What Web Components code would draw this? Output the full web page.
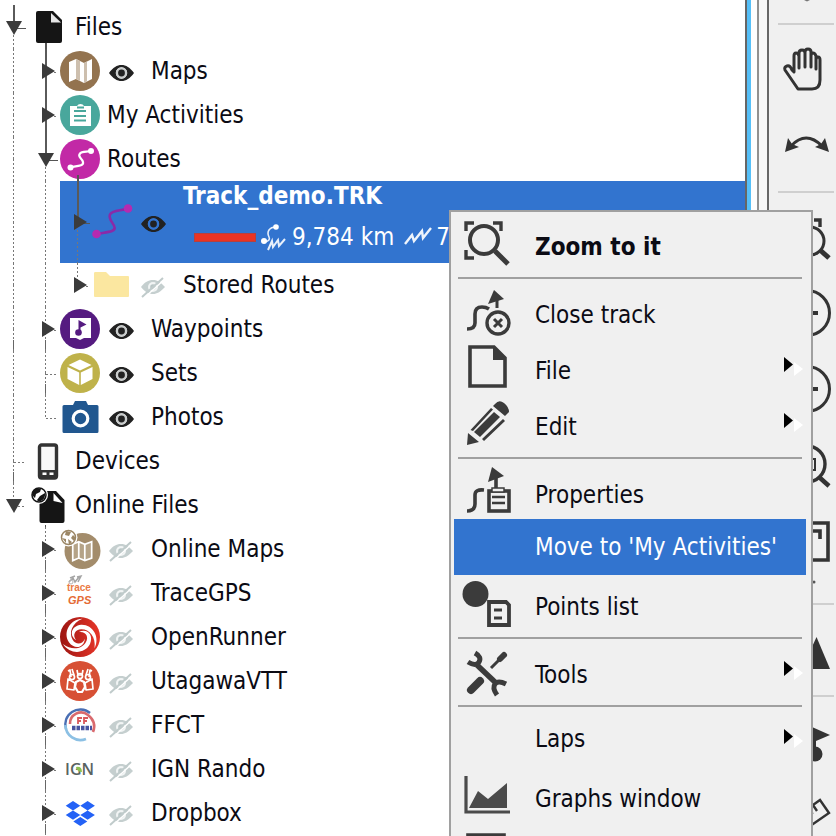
<!DOCTYPE html>
<html lang="en">
<head>
<meta charset="utf-8">
<title>Files</title>
<style>
  html, body { height: 100%; margin: 0; }
  body {
    overflow: hidden;
    background: #fff;
    color: #0b0b14;
    font: 24px/30px "DejaVu Sans Condensed", "DejaVu Sans", sans-serif;
  }
</style>
</head>
<body>
<app-window>
  <file-tree slot="tree">
    <tree-row icon="files" lines="sd" branch="open" stub="solid" child="solid">Files</tree-row>
    <tree-row icon="maps" lines="dd ss" branch="closed" eye="on">Maps</tree-row>
    <tree-row icon="activities" lines="dd ss" branch="closed">My Activities</tree-row>
    <tree-row icon="routes" lines="dd sd" branch="open" stub="solid" child="solid">Routes</tree-row>
    <tree-row icon="track" lines="dd dd sd" branch="closed" stub="solid" eye="on" selected>
      <track-summary color="#ea3323" distance="9,784 km" climb="7">Track_demo.TRK</track-summary>
    </tree-row>
    <tree-row icon="folder" lines="dd dd dn" branch="closed" eye="off">Stored Routes</tree-row>
    <tree-row icon="waypoints" lines="dm dm" branch="closed" eye="on">Waypoints</tree-row>
    <tree-row icon="sets" lines="dd dm" eye="on">Sets</tree-row>
    <tree-row icon="photos" lines="dd dn" eye="on">Photos</tree-row>
    <tree-row icon="device" lines="dm">Devices</tree-row>
    <tree-row icon="online" lines="dn" branch="open" child="dots">Online Files</tree-row>
    <tree-row icon="onlinemaps" lines="nn dm" branch="closed" eye="off">Online Maps</tree-row>
    <tree-row icon="tracegps" lines="nn dm" branch="closed" eye="off">TraceGPS</tree-row>
    <tree-row icon="openrunner" lines="nn dm" branch="closed" eye="off">OpenRunner</tree-row>
    <tree-row icon="utagawa" lines="nn dm" branch="closed" eye="off">UtagawaVTT</tree-row>
    <tree-row icon="ffct" lines="nn dm" branch="closed" eye="off">FFCT</tree-row>
    <tree-row icon="ign" lines="nn dm" branch="closed" eye="off">IGN Rando</tree-row>
    <tree-row icon="dropbox" lines="nn dm" branch="closed" eye="off">Dropbox</tree-row>
  </file-tree>

  <tool-bar slot="tools">
    <tool-button icon="more" label="More" short></tool-button>
    <tool-divider></tool-divider>
    <tool-button icon="hand" label="Pan"></tool-button>
    <tool-button icon="arc" label="Rotate"></tool-button>
    <tool-divider></tool-divider>
    <tool-button icon="zoomfit" label="Zoom to fit"></tool-button>
    <tool-button icon="plus" label="Zoom in"></tool-button>
    <tool-button icon="minus" label="Zoom out"></tool-button>
    <tool-button icon="zoomone" label="Zoom 1:1"></tool-button>
    <tool-button icon="frame" label="Window"></tool-button>
    <tool-button icon="dot" label="Window options" short></tool-button>
    <tool-divider></tool-divider>
    <tool-button icon="relief" label="Relief"></tool-button>
    <tool-divider></tool-divider>
    <tool-button icon="flag" label="Waypoint"></tool-button>
    <tool-button icon="ruler" label="Measure"></tool-button>
  </tool-bar>

  <context-menu slot="menu">
    <menu-item icon="zoomto" strong>Zoom to it</menu-item>
    <menu-divider></menu-divider>
    <menu-item icon="closetrack">Close track</menu-item>
    <menu-item icon="file" submenu>File</menu-item>
    <menu-item icon="edit" submenu>Edit</menu-item>
    <menu-divider></menu-divider>
    <menu-item icon="properties">Properties</menu-item>
    <menu-item active>Move to 'My Activities'</menu-item>
    <menu-item icon="points">Points list</menu-item>
    <menu-divider></menu-divider>
    <menu-item icon="tools" submenu>Tools</menu-item>
    <menu-divider></menu-divider>
    <menu-item submenu>Laps</menu-item>
    <menu-item icon="graphs">Graphs window</menu-item>
    <menu-item icon="window"></menu-item>
  </context-menu>
</app-window>

<script>
const INK = "#3b3b3b";

const eyeShape = (color, hole) => `
  <path fill="${color}" fill-rule="evenodd" d="M2 14C6 8.500 10 6 14.500 6S23 8.500 27 14C23 19.500 19 22 14.500 22S6 19.500 2 14ZM14.500 8.300a5.700 5.700 0 1 0 0 11.400a5.700 5.700 0 1 0 0-11.400Z"/>
  <circle cx="14.500" cy="14" r="5.700" fill="${hole}"/>
  <circle cx="14.500" cy="14" r="3.400" fill="${color}"/>`;

const mapFolds = (shade) => `
  <path fill="#fff" d="M9 11l7-3v20l-7 3zM24 12l8-4v20l-8 4z"/>
  <path fill="#fff" d="M16 8l8 4v20l-8-4z"/>
  <path fill="${shade}" d="M16 8l4 2v20l-4-2zM24 12l3-1.500v20L24 32z"/>`;

const globe = (x, y, color) => `
  <circle cx="${x}" cy="${y}" r="9" fill="#fff"/>
  <circle cx="${x}" cy="${y}" r="7" fill="#fff" stroke="${color}" stroke-width="1.500"/>`;

// [width, height, markup]
const ICONS = {
  files: [40, 40, `<path fill="#151515" d="M10 4h15l9 9v21q0 2-2 2H10q-2 0-2-2V6q0-2 2-2z"/><path fill="#e6e6e6" d="M23 6l10 9.500H23z"/>`],
  online: [40, 40, `<path fill="#151515" d="M13 6h15l8.500 9v21q0 2-2 2h-21q-2 0-2-2V8q0-2 1.500-2z"/><path fill="#fff" d="M25.500 8l9 10-9-2z"/>${globe(11, 10, "#151515")}<path fill="#151515" d="M4 10q0-5 5-7l4 1-1 3-4 2-1 4zM12 11l5-3q1 5-4 8-3 1-4-1z"/>`],
  maps: [40, 40, `<circle cx="20" cy="20" r="20" fill="#93734f"/>${mapFolds("#cdbfae")}`],
  onlinemaps: [40, 40, `<circle cx="22.500" cy="22" r="18" fill="#a38c6b"/><g transform="translate(5 5) scale(.86)" stroke="#fff" stroke-width="2" fill="none"><path fill="#b5a387" d="M9 12l7-3 7 3 8-3v19l-8 3-7-3-7 3z"/><path d="M16 9v19M23 12v19"/></g>${globe(8.5, 8.5, "#9c8766")}<path fill="#9c8766" d="M6 2l5 1-2 4-4-1zM13 6l3 3-2 3-3-3zM2 9l4 1v4zM8 10l4 3-3 3z"/>`],
  activities: [40, 40, `<circle cx="20" cy="20" r="20" fill="#49a79c"/><path fill="#fff" d="M10 11h7q1-2 3.500-2t3.500 2h7v20H10z"/><path stroke="#49a79c" stroke-width="1.800" d="M14 16h12M14 21h12M14 25.500h12M17 12.500h7"/>`],
  routes: [40, 40, `<circle cx="20" cy="20" r="20" fill="#c229a6"/><path fill="none" stroke="#fff" stroke-width="2.200" d="M11 28C18 27 24 27 23 23S17 18 20 14.500C21.500 12 27 13 31 12"/><circle cx="10.500" cy="28.500" r="3" fill="#fff"/><circle cx="31" cy="12" r="3" fill="#fff"/>`],
  track: [40, 40, `<path fill="none" stroke="#8a2aa8" stroke-width="2.600" d="M4.500 32C15 30 24 30 22.500 25C21.500 21 16 17 18 12.500C20 8 29 9 36 6.500"/><circle cx="4.500" cy="32" r="4.300" fill="#b52bb0"/><circle cx="36" cy="6.500" r="4.300" fill="#b52bb0"/>`],
  folder: [40, 40, `<path fill="#fbe7a0" d="M3.500 7H14l4 4h18q1 0 1 1v19q0 1-1 1H3q-1 0-1-1V8q0-1 1.500-1z"/>`],
  waypoints: [40, 40, `<circle cx="20" cy="20" r="20" fill="#551b80"/><path fill="#fff" d="M10 9h21v20h-7l-4 2-4-2h-6z"/><circle cx="18.500" cy="23.500" r="3.300" fill="#551b80"/><path fill="#551b80" d="M18.500 23V11l8 4.500-6 3V23z"/>`],
  sets: [40, 40, `<circle cx="20" cy="20" r="20" fill="#bfb24a"/><path fill="#fff" d="M20 6.500L31.500 12 20 17.500 8.500 12zM7.500 14l11.700 5.500V32L7.500 26zM32.500 14l-11.700 5.500V32l11.700-6z"/>`],
  photos: [40, 40, `<path fill="#21578f" d="M4 8h9l2-4h11l2 4h9q1.500 0 1.500 1.500v25q0 1.500-1.500 1.500H4q-1.500 0-1.500-1.500v-25Q2.500 8 4 8z"/><circle cx="20.500" cy="21.500" r="7.300" fill="#21578f" stroke="#fff" stroke-width="3.200"/>`],
  device: [40, 40, `<rect x="11.500" y="4" width="17" height="33" rx="2" fill="#f8f8f8" stroke="#333" stroke-width="3.400"/><path fill="#333" d="M11 29h18v8H11z"/><path fill="#fff" d="M14.500 31.500h4v2.500h-4zM21.500 31.500h4v2.500h-4z"/>`],
  tracegps: [40, 40, `<path fill="none" stroke="#a5a5a5" stroke-width="1.500" d="M9 9l4-4 2 4 4-5M10 5l5-2M17 4l4-1-3 6"/><circle cx="11" cy="9" r="2" fill="none" stroke="#b5b5b5"/><text x="7" y="18" fill="#ea7a45" font-family="Liberation Sans" font-weight="bold" font-size="10">trace</text><text x="8" y="31" fill="#e46b35" font-family="Liberation Sans" font-weight="bold" font-style="italic" font-size="11">GPS</text>`],
  openrunner: [40, 40, `<defs><linearGradient id="g"><stop stop-color="#9c1511"/><stop offset="1" stop-color="#e83629"/></linearGradient></defs><circle cx="20" cy="20" r="20" fill="url(#g)"/><g fill="#fff"><path id="arm" d="M19 15C26 14 29 20 26 25C22 32 12 34 3 27C10 38 25 37 30 27C34 18 27 11 19 15Z"/><use href="#arm" transform="rotate(120 20 20)"/><use href="#arm" transform="rotate(240 20 20)"/></g>`],
  utagawa: [40, 40, `<circle cx="20" cy="20" r="20" fill="#d75034"/><g fill="none" stroke="#fff" stroke-width="1.700" stroke-linejoin="round"><path d="M8 10l2-1 1 7M12 8l2 6M26 14l2-6M29 16l1-7 2 1M17 9l1 5h4l1-5"/><circle cx="12" cy="16" r="2.500"/><circle cx="28" cy="16" r="2.500"/><circle cx="20" cy="15" r="2.500"/><path d="M8 18l-1 10 7 1 1-7zM32 18l1 10-7 1-1-7z"/></g><path fill="#d75034" stroke="#fff" stroke-width="2.200" d="M16 21l4-2 4 2 1 5-3 5h-4l-3-5z"/>`],
  ffct: [40, 40, `<path fill="none" stroke="#4a6fb4" stroke-width="2.400" d="M30 8A15 15 0 0 0 6 24"/><path fill="none" stroke="#8cc0e4" stroke-width="2.600" d="M5.500 20A15 15 0 0 0 26 34"/><path fill="none" stroke="#d96a6e" stroke-width="2.600" d="M10 19A11 11 0 0 1 28 10Q37 17 33 27"/><path fill="#fff" d="M12 20q1-9 9-9t10 9z"/><path stroke="#d9585c" stroke-width="1.800" fill="none" d="M18 19v-6h4M18 16h3M24 19v-6h4M24 16h3"/><path fill="none" stroke="#4954a0" stroke-width="4.500" stroke-dasharray="3.500 1" d="M12 23h20"/>`],
  ign: [40, 40, `<text x="5" y="26" fill="#596361" font-family="Open Sans, sans-serif" font-weight="600" font-size="16">IGN</text><path fill="#8cc152" d="M16 18q6-1 6 5q-5 0-6-5z"/>`],
  dropbox: [40, 40, `<path fill="#2462f6" d="M13 8l7.300 4.700L13 17.400 5.700 12.700zM27.600 8l7.300 4.700-7.300 4.700-7.300-4.700zM13 17.400l7.300 4.700L13 26.800 5.700 22.100zM27.600 17.400l7.300 4.700-7.300 4.700-7.300-4.700zM20.300 24l7 4.500-7 4.500-7-4.500z"/>`],

  eyeon: [28, 24, eyeShape("#222", "#c9cccc")],
  eyesel: [28, 24, eyeShape("#222", "#3274cf")],
  eyeoff: [28, 24, `<path fill="#c5cfcf" d="M2 14C6 9 9 7 14 7S21 9 26 14C21 19 18 21 14 21S6 19 2 14Z"/><circle cx="14" cy="14" r="5" fill="#f1f4f4"/><circle cx="14" cy="14" r="2.800" fill="#b9c6c6"/><path stroke="#fff" stroke-width="1.500" d="M5 25L26 6"/><path stroke="#c0cbcb" stroke-width="2" d="M3 24L24 5"/>`],
  open: [24, 16, `<path fill="#3b3b3b" d="M0 2h16L8 16z"/>`],
  closed: [24, 16, `<path fill="#3b3b3b" d="M4 0v16l13-8z"/>`],
  distance: [28, 28, `<g fill="none" stroke="#e8f0fb" stroke-width="1.600"><path d="M4 19q7-1 5-5t0-7q2-3 7-3"/><path stroke-width="2" d="M8 27l4-9 1 6 5-7 1 6 6-7"/></g><circle cx="4" cy="18" r="3" fill="#fff"/><circle cx="16" cy="4" r="2.800" fill="#fff"/>`],
  climb: [28, 28, `<path fill="none" stroke="#eef4fc" stroke-width="2.400" d="M1 21l7-9 2 6 8-10 1 7 8-10"/>`],

  zoomto: [48, 48, `<g fill="none" stroke="${INK}"><path stroke-width="3.400" d="M3 12V4h8M30 4h8v8M3 31v8h8"/><circle cx="21" cy="21" r="14" stroke-width="4"/><path stroke-width="5" d="M32 32l13 13"/></g>`],
  closetrack: [48, 48, `<g fill="none" stroke="${INK}"><path stroke-width="3.600" d="M4 42q8 0 8-6V27q0-7 7-7 4 0 7 2"/><circle cx="35" cy="36" r="11" stroke-width="3.400"/><path stroke-width="3" d="M31 32l8 8M39 32l-8 8M34 8v13"/></g><path fill="${INK}" d="M31 3l10 9-16 5z"/>`],
  file: [48, 48, `<path fill="none" stroke="${INK}" stroke-width="3.600" d="M7 4h24l11 11v28H7z"/><path fill="${INK}" d="M30 3l13 14H30z"/>`],
  edit: [48, 48, `<g fill="${INK}"><path d="M32 5q4-5 9-1t5 9l-4 4-12-10zM5 34l11 9-12 3z"/><path d="M28 9l2 1.500L10 32l-2.500-1zM40 20l2 2-21 20-2-2z"/><path d="M31 13l6 5-20 20-6-5z"/></g>`],
  properties: [48, 48, `<g fill="none" stroke="${INK}"><path stroke-width="3.600" d="M4 44q8 0 8-7V28q0-6 9-5"/><path stroke-width="3.600" d="M33 9v12"/><rect x="26" y="24" width="20" height="20" stroke-width="3.600"/><path stroke-width="2.500" d="M29 30h13M29 36h13"/></g><path fill="${INK}" d="M29 0l12 9-16 6z"/><rect x="29" y="21" width="12" height="4" fill="#eee" stroke="${INK}" stroke-width="1.500"/>`],
  points: [48, 48, `<circle cx="12.500" cy="15" r="13" fill="${INK}"/><path fill="#f0f0f0" stroke="${INK}" stroke-width="3.800" d="M26 23h17l3 3v20H26z"/><path stroke="${INK}" stroke-width="3" d="M31 31h8M31 39h8"/>`],
  tools: [48, 48, `<g fill="none" stroke="${INK}"><path stroke-width="5.500" d="M14 18l19 18"/><path stroke-width="5" d="M12 6q7 4 4 9T5 15M42 45M43 37q-8-4-11 0t2 11"/><path stroke-width="8" stroke-linecap="round" d="M8 43l9-9"/><path stroke-width="3" d="M28 21l10-10"/><path stroke-width="6" stroke-linecap="round" d="M37 12l4-4"/></g>`],
  graphs: [48, 48, `<path fill="none" stroke="#4b4b4b" stroke-width="3.200" d="M3 5v36h44"/><path fill="#4b4b4b" d="M6 37l9-17 10 8 19-16v25z"/>`],
  window: [48, 48, `<path fill="none" stroke="${INK}" stroke-width="3.600" d="M5 8h36v36H5z"/>`],
  arrow: [20, 20, `<path fill="#fff" d="M10 5v14l9-7z"/><path d="M0 0v15l9-7.500z"/>`],

  more: [48, 8, `<path fill="#777" d="M22 0h6l-3 1.500z"/>`],
  hand: [48, 48, `<path fill="none" stroke="#333" stroke-width="3" stroke-linejoin="round" d="M16 43L3 24q-1-3 2-4t5 4l2 2V10q0-3 2-3t3 3v12V7q0-3 3-3t3 3v14V6q0-3 3-3t3 3v15V10q0-3 2-3t3 3v13V14q0-3 2-3t2 3v20q0 9-8 9z"/>`],
  arc: [48, 48, `<path fill="none" stroke="#333" stroke-width="3.200" d="M9 24Q24 8 40 24"/><path fill="#333" d="M3 30l3-14 4 6 7 3zM47 30L33 25l6-3 4-6z"/>`],
  zoomfit: [48, 48, `<path fill="none" stroke="#333" stroke-width="3.400" d="M3 13V6h8M32 6h6v7M3 30v9h8"/><circle cx="28" cy="27" r="14" fill="none" stroke="#333" stroke-width="3"/><path stroke="#333" stroke-width="5" d="M38 36l9 8"/>`],
  plus: [48, 48, `<circle cx="25" cy="23" r="22.500" fill="none" stroke="#333" stroke-width="3"/><path stroke="#333" stroke-width="4" d="M14 23h22M25 12v22"/>`],
  minus: [48, 48, `<circle cx="25" cy="23" r="22.500" fill="none" stroke="#333" stroke-width="3"/><path stroke="#333" stroke-width="4" d="M14 23h22"/>`],
  zoomone: [48, 48, `<circle cx="25" cy="22" r="18" fill="none" stroke="#333" stroke-width="3.400"/><path fill="none" stroke="#333" stroke-width="2" d="M24 17h9v11h-9z"/><path stroke="#333" stroke-width="4.500" d="M37 35l10 9"/>`],
  frame: [48, 48, `<path fill="none" stroke="#333" stroke-width="3.600" d="M6 5h40v37H6zM26 13h12v8"/>`],
  dot: [48, 8, `<circle cx="32" cy="2" r="1.500" fill="#555"/>`],
  relief: [48, 48, `<path fill="#333" d="M20 43L34.500 11 48 43z"/>`],
  flag: [48, 48, `<path fill="#333" d="M30 9l18 8-14 6v14h-4z"/><circle cx="33" cy="36" r="7.500" fill="#333"/>`],
  ruler: [48, 48, `<path fill="none" stroke="#333" stroke-width="2.400" d="M10 26L38 6l9 13L18 39zM31 11l4 6M24 16l7 4"/>`],
};

function svg(name) {
  const [w, h, body] = ICONS[name];
  return `<svg width="${w}" height="${h}" viewBox="0 0 ${w} ${h}" aria-hidden="true">${body}</svg>`;
}

const RESET = `
  * { box-sizing: border-box; }
  svg { display: block; flex: none; overflow: visible; }
  button { margin: 0; padding: 0; border: 0; background: none; color: inherit; font: inherit; text-align: left; }
`;

class Base extends HTMLElement {
  connectedCallback() {
    if (this.shadowRoot) return;
    this.attachShadow({ mode: "open" }).innerHTML = `<style>${RESET}</style>${this.view()}`;
  }
}

customElements.define("app-window", class extends Base {
  view() {
    return `
      <style>
        :host { position: relative; display: flex; height: 100vh; overflow: hidden; }
        main { flex: 1; min-width: 0; overflow: hidden; }
        .splitter { display: flex; flex: none; width: 24px; background: #fafafa; }
        .splitter i { flex: none; }
        .edge { width: 2px; background: #666; }
        .glow { width: 4px; background: #55bff8; }
        .gap { width: 6px; background: #fdfdfd; }
        .line { width: 2px; background: #909090; }
        .pane { width: 8px; background: #f6f6f6; }
        ::slotted(context-menu) { position: absolute; top: 210px; right: 23px; }
      </style>
      <main><slot name="tree"></slot></main>
      <div class="splitter"><i class="edge"></i><i class="glow"></i><i class="gap"></i><i class="line"></i><i class="pane"></i><i class="edge"></i></div>
      <slot name="tools"></slot>
      <slot name="menu"></slot>`;
  }
});

customElements.define("file-tree", class extends Base {
  view() {
    this.setAttribute("role", "tree");
    return `<style>:host { display: flex; flex-direction: column; padding-top: 5px; }</style><slot></slot>`;
  }
});

// lines: one token per level, first letter is the upper half, second the lower half
customElements.define("tree-row", class extends Base {
  view() {
    this.setAttribute("role", "treeitem");
    const levels = this.getAttribute("lines").split(" ");
    const branch = this.getAttribute("branch");
    const eye = this.getAttribute("eye");
    const selected = this.hasAttribute("selected");
    const cell = (pair, i) => {
      const own = i === levels.length - 1;
      return `<div class="cell ${i ? "" : "root"}">
        <i class="${pair[0]}"></i><i class="${pair[1]}"></i>
        ${own ? `<b class="${this.getAttribute("stub") || ""}"></b>` : ""}
        ${own && branch ? `<button class="toggle" aria-label="Toggle">${svg(branch)}</button>` : ""}
      </div>`;
    };
    const cells = levels.map(cell);
    const bodyCells = selected ? cells.splice(-1) : [];
    const eyeIcon = eye === "off" ? "eyeoff" : selected ? "eyesel" : "eyeon";
    return `
      <style>
        :host { display: flex; min-height: 44px; white-space: nowrap; }
        :host([selected]) { min-height: 82px; color: #fff; }
        .cell { position: relative; display: flex; flex-direction: column; flex: none; width: 32px; padding-left: 17px; }
        .cell.root { width: 28px; padding-left: 13px; }
        .cell i { flex: 1; width: 1px; }
        .cell .s { width: 2px; background: #5a5a5a; }
        .cell .d, .cell .m { background: repeating-linear-gradient(#777 0 2px, transparent 2px 4px); }
        .cell .m { background: linear-gradient(#666, #666) 0 11px / 1px 9px no-repeat, repeating-linear-gradient(#777 0 2px, transparent 2px 4px); }
        .cell b { position: absolute; top: 50%; right: 2px; width: 12px; height: 1px; margin-top: 1px; background: repeating-linear-gradient(90deg, #777 0 2px, transparent 2px 4px); }
        .cell b.solid { background: #555; }
        .toggle { position: absolute; top: 50%; right: -2px; margin-top: -8px; }
        .body { display: flex; flex: 1; align-items: stretch; min-width: 0; }
        :host([selected]) .body { background: #3274cf; }
        .icon { position: relative; align-self: center; }
        .icon.solid::after, .icon.dots::after { content: ""; position: absolute; left: 17px; bottom: -2px; width: 2px; height: 6px; background: #555; }
        .icon.dots::after { width: 1px; height: 2px; }
        .eye { align-self: center; margin-left: 7px; margin-right: 9px; }
        .label { align-self: center; padding-left: 7px; }
        :host([selected]) .label { align-self: stretch; }
      </style>
      ${cells.join("")}
      <div class="body">
        ${bodyCells.join("")}
        <div class="icon ${this.getAttribute("child") || ""}">${svg(this.getAttribute("icon"))}</div>
        ${eye ? `<button class="eye" aria-label="Visibility">${svg(eyeIcon)}</button>` : ""}
        <div class="label"><slot></slot></div>
      </div>`;
  }
});

customElements.define("track-summary", class extends Base {
  view() {
    return `
      <style>
        :host { display: flex; flex-direction: column; }
        .name { font-weight: bold; }
        .stats { display: flex; align-items: center; gap: 4px; height: 52px; padding-left: 11px; }
        .swatch { width: 62px; height: 9px; border: 1px solid #b5403f; background: ${this.getAttribute("color")}; }
        .climb { padding-left: 6px; display: flex; }
      </style>
      <div class="name"><slot></slot></div>
      <div class="stats">
        <div class="swatch"></div>
        ${svg("distance")}<span>${this.getAttribute("distance")}</span>
        <div class="climb">${svg("climb")}</div><span>${this.getAttribute("climb")}</span>
      </div>`;
  }
});

customElements.define("context-menu", class extends Base {
  view() {
    this.setAttribute("role", "menu");
    return `
      <style>
        :host { display: flex; flex-direction: column; width: 364px; padding: 3px 5px 3px 3px; box-sizing: border-box; border: 2px solid #a0a0a0; background: #f0f0f0; }
      </style>
      <slot></slot>`;
  }
});

customElements.define("menu-item", class extends Base {
  view() {
    const icon = this.getAttribute("icon");
    return `
      <style>
        :host { display: block; }
        button { display: flex; align-items: center; width: 100%; height: 56px; padding: 0 2px 0 9px; white-space: nowrap; }
        .icon { flex: none; width: 48px; margin-right: 24px; }
        .text { flex: 1; }
        .icon:not(:empty) + .text { padding-top: 8px; }
        :host([strong]) { font-weight: bold; }
        :host([active]) { background: #3274cf; color: #fff; }
        .arrow { padding-bottom: 1px; }
      </style>
      <button role="menuitem">
        <span class="icon">${icon ? svg(icon) : ""}</span>
        <span class="text"><slot></slot></span>
        ${this.hasAttribute("submenu") ? svg("arrow") : ""}
      </button>`;
  }
});

customElements.define("menu-divider", class extends Base {
  view() {
    return `<style>
      :host { display: block; height: 12px; padding: 6px 0 4px 4px; box-sizing: border-box; }
      div { height: 2px; margin-right: 4px; background: #a0a0a0; }
    </style><div></div>`;
  }
});

customElements.define("tool-bar", class extends Base {
  view() {
    this.setAttribute("role", "toolbar");
    return `
      <style>:host { display: flex; flex-direction: column; flex: none; width: 67px; padding: 0 2px 0 9px; box-sizing: border-box; background: #f0f0f0; }</style>
      <slot></slot>`;
  }
});

customElements.define("tool-button", class extends Base {
  view() {
    return `
      <style>
        :host { display: block; flex: none; }
        button { display: flex; align-items: center; justify-content: center; width: 100%; height: 76px; }
        :host([short]) button { align-items: flex-start; height: 16px; }
      </style>
      <button aria-label="${this.getAttribute("label")}">${svg(this.getAttribute("icon"))}</button>`;
  }
});

customElements.define("tool-divider", class extends Base {
  view() {
    return `<style>
      :host { display: block; flex: none; height: 16px; padding: 7px 0; box-sizing: border-box; }
      div { height: 2px; background: #cfcfcf; }
    </style><div></div>`;
  }
});
</script>
</body>
</html>
